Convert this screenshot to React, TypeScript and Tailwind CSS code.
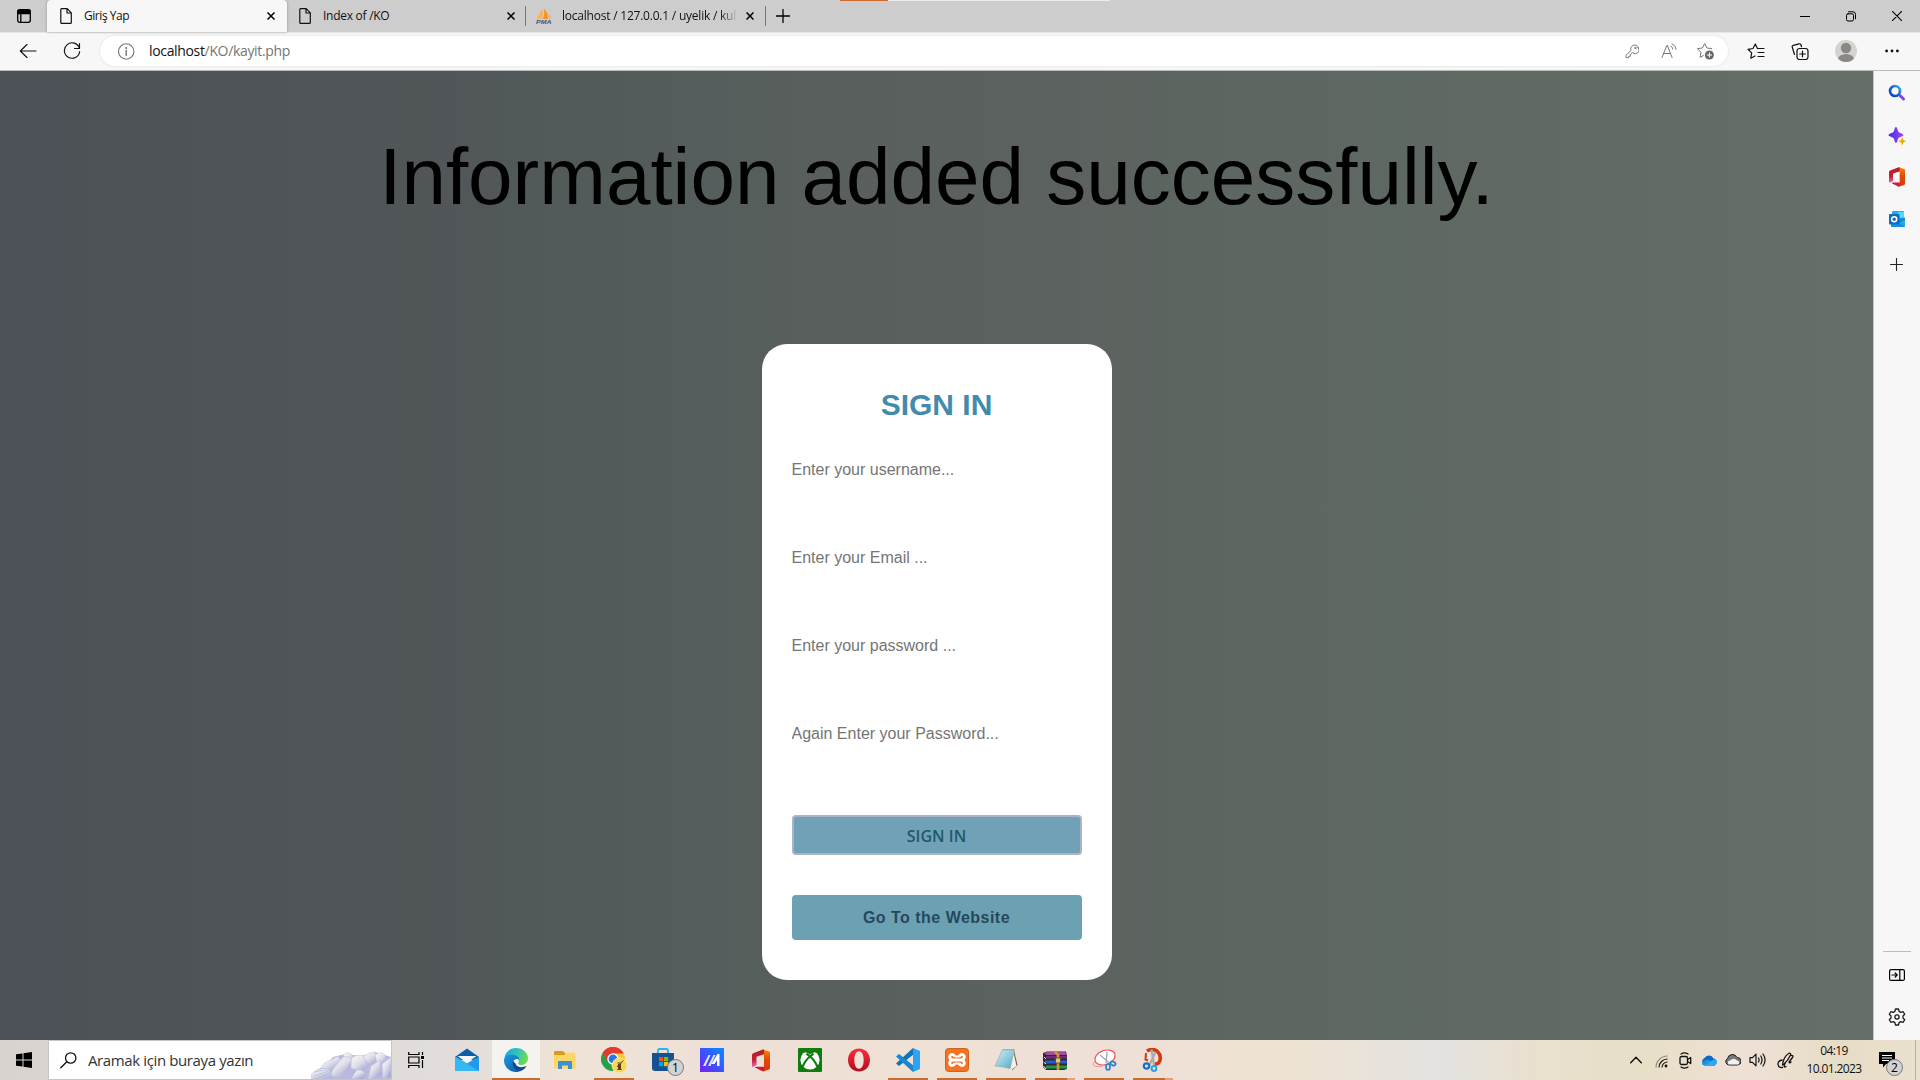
import React, { type ReactNode } from "react";

type SvgProps = { w?: number; h?: number; sw?: number; className?: string; children: ReactNode };

/* Line icon: stroke follows the text colour. */
function Line({ w = 16, h = w, sw = 1, className = "", children }: SvgProps) {
  return (
    <svg
      width={w}
      height={h}
      viewBox={`0 0 ${w} ${h}`}
      fill="none"
      stroke="currentColor"
      strokeWidth={sw}
      strokeLinecap="round"
      strokeLinejoin="round"
      className={`shrink-0 ${className}`}
    >
      {children}
    </svg>
  );
}

/* Filled, multi-colour icon. */
function Art({ w = 24, h = w, className = "", children }: SvgProps) {
  return (
    <svg width={w} height={h} viewBox={`0 0 ${w} ${h}`} className={`shrink-0 ${className}`}>
      {children}
    </svg>
  );
}

const CloseIcon = () => (
  <Line w={8} sw={1.5} className="text-black">
    <path d="M.5.5l7 7M7.5.5l-7 7" strokeLinecap="butt" />
  </Line>
);

const DocIcon = () => (
  <Line w={12} h={16} sw={1.2} className="text-[#111]">
    <path d="M.8 1.6C.8 1 1.1.7 1.6.7H7.2L11.3 4.8V14.4c0 .6-.3.9-.8.9H1.6c-.5 0-.8-.3-.8-.9ZM7 .8V5h4.2" />
  </Line>
);

const PmaIcon = () => (
  <Art w={16}>
    <path d="M1 11C2 8 4 4 6.500 1.500C7 5 7 8 6 11Z" fill="#fbb25a" />
    <path d="M7 11C8.500 7 8.500 3 8 .5C11 3 12 7 12 11Z" fill="#f7931e" />
    <path d="M12.500 10.500C13 8 12.800 6 12.300 5C14 6.500 15 8.500 15.400 10.500Z" fill="#fbb25a" />
    <text x="0" y="15.600" fontSize="5.500" fontWeight="700" fontStyle="italic" textLength="15.500" lengthAdjust="spacingAndGlyphs" fill="#4a4f87" fontFamily="Liberation Sans, sans-serif">
      PMA
    </text>
  </Art>
);

function OfficeIcon({ w, h }: { w: number; h: number }) {
  return (
    <svg width={w} height={h} viewBox="0 0 18 22" className="shrink-0">
      <defs>
        <linearGradient id="officeLeft" x1="0" y1="0" x2="0" y2="1">
          <stop offset="0" stopColor="#b01f24" />
          <stop offset=".6" stopColor="#c8203c" />
          <stop offset="1" stopColor="#e06bb0" />
        </linearGradient>
        <linearGradient id="officeRight" x1="0" y1="0" x2="0" y2="1">
          <stop offset="0" stopColor="#f78a00" />
          <stop offset=".45" stopColor="#e2470a" />
          <stop offset="1" stopColor="#d83b01" />
        </linearGradient>
      </defs>
      <path d="M11 0L17 2Q18 2.400 18 3.500V18.500Q18 19.600 17 20L11 22L12 17V5Z" fill="url(#officeRight)" />
      <path d="M11 0L1.200 3.800Q0 4.300 0 5.500V16.500Q0 18 2 17L4.500 15.600V7.200L12 4.700V0Z" fill="url(#officeLeft)" />
      <path d="M3.500 18.200L11 22Q12.200 21.500 12.200 20V17.300H4.500Q2.500 17.300 3.500 18.200Z" fill="#d6153c" />
    </svg>
  );
}

function Tab({ icon, title, active, fade }: { icon: ReactNode; title: string; active?: boolean; fade?: boolean }) {
  return (
    <div
      className={`flex h-8 items-center ${
        active
          ? "w-60 rounded-t-[4px] bg-[#f7f7f7] pl-[11px] pr-3 shadow-[0_0_3px_rgba(0,0,0,0.3)]"
          : "w-[239px] pl-[9px] pr-3"
      }`}
    >
      <span className="flex w-4 justify-center">{icon}</span>
      <span
        className={`flex-1 whitespace-nowrap text-[12px] leading-4 ${
          fade
            ? "ml-[10px] bg-[linear-gradient(to_right,#111_158px,#cdcdcd_176px)] bg-clip-text tracking-[-0.22px] text-transparent"
            : active
              ? "ml-[10px] tracking-[-0.45px] text-[#111]"
              : "ml-[10px] tracking-[-0.27px] text-[#111]"
        }`}
      >
        {title}
      </span>
      <CloseIcon />
    </div>
  );
}

function TabStrip() {
  return (
    <div className="relative flex h-8 items-center bg-[#cdcdcd] text-black">
      <div className="absolute left-[840px] top-0 flex h-px w-[270px]">
        <span className="w-12 bg-[#cf6a2c]" />
        <span className="flex-1 bg-[#ededed]" />
      </div>
      <div className="flex w-[47px] justify-center pl-px">
        <Line w={14} sw={1.3}>
          <rect x=".7" y=".7" width="12.600" height="12.600" rx="2" />
          <path d="M1 1.500h12v3H1z" fill="currentColor" />
          <path d="M3.800 4v9" />
        </Line>
      </div>
      <Tab active icon={<DocIcon />} title="Giriş Yap" />
      <div className="flex items-center">
        <div className="ml-px"><Tab icon={<DocIcon />} title="Index of /KO" /></div>
        <span className="-ml-[2px] h-5 w-px bg-[#777]" />
        <div className="ml-px"><Tab fade icon={<PmaIcon />} title="localhost / 127.0.0.1 / uyelik / kul" /></div>
        <span className="-ml-px h-5 w-px bg-[#777]" />
      </div>
      <Line w={14} sw={1.3} className="ml-[10px]">
        <path d="M7 .5v13M.5 7h13" />
      </Line>
      <div className="ml-auto flex items-center">
        <span className="flex w-[46px] justify-center"><Line w={10}><path d="M0 5.500h10" strokeLinecap="butt" /></Line></span>
        <span className="flex w-[46px] justify-center">
          <Line w={10} h={11}>
            <rect x=".5" y="2.800" width="7" height="7.200" rx="1.500" />
            <path d="M2.500 .8h4.500a2.500 2.500 0 0 1 2.500 2.500V7.800" />
          </Line>
        </span>
        <span className="flex w-[46px] justify-center"><Line w={10} sw={1.1}><path d="M.2.2l9.600 9.600M9.800.2L.2 9.800" /></Line></span>
      </div>
    </div>
  );
}

function Toolbar() {
  return (
    <div className="flex h-[39px] items-center border-b border-[#b9bdb9] bg-[#f7f7f7] text-[#111] shadow-[inset_0_1px_0_#e6e6e6]">
      <Line w={18} h={16} sw={1.1} className="ml-[19px]">
        <path d="M1.500 8h15.500M8 1.500L1.300 8 8 14.500" />
      </Line>
      <Line w={18} sw={1.15} className="ml-[26px]">
        <path d="M16.400 6.200A7.700 7.700 0 1 0 16.700 9.500M16.500 1.500v5h-5" />
      </Line>
      <div className="ml-[19px] flex h-[30px] w-[1628px] items-center rounded-full bg-white pl-[18px] pr-[14px] text-[#757575] shadow-[0_0_3px_rgba(0,0,0,0.1)]">
        <Line w={17} sw={1.1}>
          <circle cx="8.200" cy="8.500" r="7.700" />
          <path d="M8.200 7.500v5" strokeWidth="1.400" />
          <circle cx="8.200" cy="5" r=".5" fill="currentColor" />
        </Line>
        <span className="ml-[14px] text-[14px] leading-5 tracking-[-0.34px]">
          <span className="text-[#111]">localhost</span>/KO/kayit.php
        </span>
        <span className="ml-auto flex items-center">
          <Line w={14} h={15}>
            <path d="M13.300 3.600a3.700 3.700 0 0 0-7.200 2.800L1 11.300v2.400h2.700l.1-1.400h1.400V10.800L7.600 8.600A3.800 3.800 0 0 0 13.300 3.600Z" />
            <circle cx="10.300" cy="4" r=".7" />
          </Line>
          <Line w={16} h={16} className="ml-[22px]">
            <path d="M1 14.500L5.800 2.500h.6l4.700 12M2.500 10.500h7M10 3q1.600 1 1.800 3M11 .8q3.700 1.700 4.200 5.500" />
          </Line>
          <Line w={18} h={18} className="ml-[19px]">
            <path d="M14.900 6.500l-4-.5L8.700 1.500 6.400 6 1.400 6.700l3.600 3.600-.9 5 3.300-1.700M15.100 6.500l.7.400" />
            <circle cx="13.400" cy="13" r="4.500" fill="#666" stroke="none" />
            <path d="M13.400 10.800v4.400M11.200 13h4.400" stroke="#fff" />
          </Line>
        </span>
      </div>
      <Line w={18} h={17} sw={1.2} className="ml-[19px]">
        <path d="M10.500 5.500L8.300 1 6 5.500 1 6.300l3.700 3.600-.9 5.300L8 13M10.500 5.500h6.500M11 9.500h6M11 13.500h6" />
      </Line>
      <Line w={18} h={17} sw={1.2} className="ml-[26px]">
        <path d="M3.500 11.500L1.300 4.300a1.600 1.600 0 0 1 1-2L8 .8q1.400-.2 1.900 1l.6 1.900" />
        <rect x="6" y="5.500" width="11" height="11" rx="2.500" />
        <path d="M11.500 8.200v5.600M8.700 11h5.600" />
      </Line>
      <Art w={22} className="ml-[26px]">
        <defs><clipPath id="avatar"><circle cx="11" cy="11" r="11" /></clipPath></defs>
        <g clipPath="url(#avatar)">
          <rect width="22" height="22" fill="#d5d3d0" />
          <circle cx="11" cy="8" r="5.200" fill="#8b8785" />
          <ellipse cx="11" cy="19.200" rx="8" ry="5.200" fill="#8b8785" />
        </g>
      </Art>
      <Line w={14} h={4} className="ml-[28px]">
        <g fill="currentColor" stroke="none"><circle cx="1.600" cy="2" r="1.400" /><circle cx="7" cy="2" r="1.400" /><circle cx="12.400" cy="2" r="1.400" /></g>
      </Line>
    </div>
  );
}

const fields = ["Enter your username...", "Enter your Email ...", "Enter your password ...", "Again Enter your Password..."];

function Page() {
  return (
    <main className="flex flex-1 flex-col items-center bg-[linear-gradient(to_right,#4b5156_0%,#515759_25%,#535b5a_32%,#555e5c_38%,#595f5d_45%,#5c625f_57%,#5d6661_66%,#606a63_82%,#656f67_100%)] font-['Liberation_Sans',Arial,sans-serif]">
      <h1 className="mt-[60px] h-[92px] whitespace-nowrap text-[80px] leading-[92px] text-black">Information added successfully.</h1>
      <form className="mt-[121px] flex h-[636px] w-[350px] flex-col rounded-[25px] bg-white px-[30px]">
        <h2 className="mt-[43px] text-center text-[30px] font-bold leading-9 text-[#428bad]">SIGN IN</h2>
        <div className="mt-[22px] flex flex-col">
          {fields.map((f) => (
            <input key={f} placeholder={f} className="mb-[38px] h-[50px] w-full bg-white text-[16px] outline-none placeholder:text-[#757575]" />
          ))}
        </div>
        <button type="button" className="mt-[18px] h-10 rounded-[4px] border-2 border-[#a9b5c6] bg-[#71a1b6] pt-px font-['Open_Sans',sans-serif] text-[16px] font-semibold leading-5 text-[#21596a]">SIGN IN</button>
        <button type="button" className="mt-10 h-[45px] rounded-[4px] bg-[#6ca1b4] text-[16px] font-bold tracking-[0.48px] text-[#25485c]">Go To the Website</button>
      </form>
    </main>
  );
}

function Sidebar() {
  return (
    <aside className="flex w-[47px] flex-col items-center border-l border-[#c4c7c4] bg-[#f7f7f7] pr-px text-[#222]">
      <Art w={18} className="mt-[13px]">
        <defs>
          <linearGradient id="lens" x1="0" y1="1" x2="1" y2="0"><stop stopColor="#0b3fb5" /><stop offset=".6" stopColor="#1769e0" /><stop offset="1" stopColor="#42b6ef" /></linearGradient>
        </defs>
        <path d="M12 11.500l3.500 3.500" stroke="#8a3ff0" strokeWidth="3" strokeLinecap="round" />
        <circle cx="7" cy="7" r="5" fill="none" stroke="url(#lens)" strokeWidth="2.600" />
      </Art>
      <Art w={18} className="mt-[25px]">
        <defs><linearGradient id="spark" x1="0" y1="0" x2="1" y2="0"><stop stopColor="#3a2fe8" /><stop offset="1" stopColor="#b144f5" /></linearGradient></defs>
        <path d="M8 0C9.300 0 9.500 3.700 10.600 4.900C11.700 6 15.500 6.700 15.500 8C15.500 9.300 11.700 10 10.600 11.100C9.500 12.300 9.300 16 8 16C6.700 16 6.500 12.300 5.400 11.100C4.300 10 .5 9.300 .5 8C.5 6.700 4.300 6 5.400 4.900C6.500 3.700 6.700 0 8 0Z" fill="url(#spark)" />
        <path d="M14.200 10.800C14.800 13 15.200 13.500 17.500 14.200C15.200 15 14.800 15.400 14.200 17.800C13.600 15.400 13.200 15 10.900 14.200C13.200 13.500 13.600 13 14.200 10.800Z" fill="#f5a700" stroke="#f5a700" strokeWidth=".6" />
      </Art>
      <span className="mt-[22px]"><OfficeIcon w={16} h={20} /></span>
      <Art w={16} className="mt-[24px]">
        <rect x="3" y="0" width="12" height="12" rx="1" fill="#28a8ea" />
        <rect x="9" y="1" width="6" height="6" fill="#50d9ff" />
        <path d="M2 8L16 6.500V15a1 1 0 0 1-1 1H3a1 1 0 0 1-1-1Z" fill="#1490df" />
        <path d="M16 7v8.500L9 11Z" fill="#28a8ea" />
        <path d="M10 11L16 8" stroke="#0a5cab" strokeWidth=".8" />
        <rect x="0" y="3" width="10.500" height="10.500" rx="1" fill="#0f6cbd" />
        <circle cx="5.200" cy="8.200" r="2.500" fill="none" stroke="#fff" strokeWidth="1.500" />
      </Art>
      <Line w={13} sw={1.1} className="mt-[31px]"><path d="M6.500.5v12M.5 6.500h12" /></Line>
      <span className="mt-auto h-px w-7 bg-[#bdbdbd]" />
      <Line w={16} h={12} sw={1.2} className="mt-[17px] text-black">
        <rect x=".6" y=".6" width="14.800" height="10.800" rx="1.500" />
        <path d="M10.800 1v10M3 6h5M6.200 4L8.200 6l-2 2" />
      </Line>
      <Line w={18} sw={1.3} className="mb-[14px] mt-[27px] text-[#1c1c1c]">
        <path d="M7.500 1h3l.6 2.400 1.700 1 2.400-.7 1.500 2.600L15 8v2l1.700 1.700-1.500 2.600-2.400-.7-1.700 1L10.500 17h-3l-.6-2.400-1.700-1-2.400.7-1.500-2.600L3 10V8L1.300 6.300l1.500-2.600 2.400.7 1.700-1Z" />
        <circle cx="9" cy="9" r="2.100" />
      </Line>
    </aside>
  );
}

const MailIcon = () => (
  <Art w={24}>
    <path d="M0 9L12 .5 24 9V12H0Z" fill="#0a5fa8" />
    <path d="M0 8.500L12 15.500 24 8.500V23H0Z" fill="#1e9be8" />
    <path d="M0 23V8.500L24 23Z" fill="#35b8f2" />
    <path d="M2.500 8H21.500L12 15Z" fill="#f4f7fa" />
  </Art>
);

const EdgeIcon = () => (
  <Art w={24}>
    <defs>
      <linearGradient id="edgeTop" x1="0" y1=".3" x2="1" y2=".6"><stop stopColor="#1fa6dc" /><stop offset=".45" stopColor="#2fc2bd" /><stop offset="1" stopColor="#72dd4c" /></linearGradient>
      <linearGradient id="edgeBlue" x1="0" y1="0" x2="1" y2="1"><stop stopColor="#1b9de2" /><stop offset="1" stopColor="#0c4f9e" /></linearGradient>
    </defs>
    <path d="M.5 9.500C1.600 4 6.200 0 12 0C19 0 24 5 24 10.600C24 14.800 20.800 17 17.500 17C14.500 17 13.600 15.800 14.400 14.600C15.400 13 14.800 8.500 10 7.500Z" fill="url(#edgeTop)" />
    <path d="M0 12C.2 8.200 4 6.500 8 6.500C12.600 6.500 15.600 9.600 15.300 12.500C14.500 10 9 10.600 9 15C9 19.500 13.500 22.200 18 20.800C20 20.200 21.500 19 22.300 18C20.300 21.800 16.400 24 12 24C5 24 0 18.500 0 12Z" fill="url(#edgeBlue)" />
    <path d="M9 13C7.500 17.500 10.500 22 15.500 22.300C18.500 22.400 21.500 20 22.500 17.700C19.500 19.800 12.500 20 11.500 15.500Z" fill="#12468c" />
  </Art>
);

const FolderIcon = () => (
  <Art w={22} h={20}>
    <path d="M0 2Q0 1 1 1H9L11 3H21V8H0Z" fill="#d99b1e" />
    <path d="M0 5H10L12 2.500H20.500Q21.500 2.500 21.500 3.500V17.500Q21.500 18.500 20.500 18.500H1Q0 18.500 0 17.500Z" fill="#fdd668" />
    <path d="M4 19V12Q4 11 5 11H17Q18 11 18 12V19H14V15.500H8V19Z" fill="#3a91d8" />
  </Art>
);

const ChromeIcon = () => (
  <Art w={26}>
    <path d="M1.600 6A12 12 0 0 1 22.400 6L12 12Z" fill="#e33b2e" />
    <path d="M1.600 6A12 12 0 0 0 12 24L17.200 15 12 12Z" fill="#26a148" />
    <path d="M22.400 6A12 12 0 0 1 12 24L17.200 15 12 6Z" fill="#fcc934" />
    <path d="M1.600 6L6.800 15 12 6.500H22.700L22.400 6A12 12 0 0 0 1.600 6Z" fill="#e33b2e" />
    <circle cx="12" cy="12" r="5.700" fill="#fff" /><circle cx="12" cy="12" r="4.400" fill="#2676e5" />
    <circle cx="18.500" cy="18.500" r="7.500" fill="#f5d95c" stroke="#fff0ad" strokeWidth=".7" />
    <path d="M17 17H20V22H17ZM16 23L17 21.500H20L21 23Z" fill="#6c3e17" />
    <path d="M16 20L18.500 17L22.500 13.500M16.500 16H20.500" fill="none" stroke="#6c3e17" strokeWidth="1" />
  </Art>
);

const StoreIcon = () => (
  <Art w={24}>
    <path d="M7 6V2.500Q7 1 8.500 1H15.500Q17 1 17 2.500V6" fill="none" stroke="#28b4ea" strokeWidth="1.800" />
    <path d="M1 5H23V20Q23 23 20 23H4Q1 23 1 20Z" fill="#145390" />
    <rect x="8" y="9" width="4.200" height="4.200" fill="#f25022" /><rect x="13" y="9" width="4.200" height="4.200" fill="#7fba00" />
    <rect x="8" y="14" width="4.200" height="4.200" fill="#00a4ef" /><rect x="13" y="14" width="4.200" height="4.200" fill="#ffb900" />
  </Art>
);

const AsusIcon = () => (
  <Art w={24}>
    <defs><linearGradient id="asus" x1="1" y1="0" x2="0" y2="1"><stop stopColor="#0a8cff" /><stop offset=".5" stopColor="#3a55ff" /><stop offset="1" stopColor="#7a1cf5" /></linearGradient></defs>
    <rect width="24" height="24" fill="url(#asus)" />
    <path d="M3 18L8.500 7H10.500L5.500 18ZM8 18L13.500 7H15.500L10.500 18Z" fill="#dfe8ff" />
    <path d="M11.500 16L17.500 6H19.500V18H17V12L14.500 16Z" fill="#fff" />
  </Art>
);

const XboxIcon = () => (
  <Art w={24}>
    <rect width="24" height="24" rx="1" fill="#107c10" />
    <circle cx="12" cy="12" r="9.600" fill="#fff" />
    <path d="M5.500 4.500Q8 3.700 12 6.500Q16 3.700 18.500 4.500Q16.500 2 12 2T5.500 4.500Z" fill="#107c10" />
    <path d="M12 8.500Q7.500 12 4.500 18.800M12 8.500Q16.500 12 19.500 18.800M12 8.500L8.500 5.700M12 8.500L15.500 5.700" stroke="#107c10" strokeWidth="2.200" fill="none" />
  </Art>
);

const OperaIcon = () => (
  <Art w={24}>
    <defs><linearGradient id="opera" x1="0" y1="0" x2="0" y2="1"><stop stopColor="#ff2b3d" /><stop offset="1" stopColor="#b00d20" /></linearGradient></defs>
    <path fillRule="evenodd" d="M12 .5C18.500.5 23 5.500 23 12S18.500 23.500 12 23.500 1 18.500 1 12 5.500.5 12 .5ZM12 3.200C9 3.200 7.300 7 7.300 12S9 20.800 12 20.800 16.700 17 16.700 12 15 3.200 12 3.200Z" fill="url(#opera)" />
  </Art>
);

const CodeIcon = () => (
  <Art w={24}>
    <path d="M17 0L0 15.500 3 18 18 6Z" fill="#1072b8" />
    <path d="M0 8.500L3 6L18 18L17 24Z" fill="#1788d1" />
    <path d="M17 0L24 3V21L17 24Z" fill="#2ba5f3" />
  </Art>
);

const XamppIcon = () => (
  <Art w={24}>
    <rect x=".5" y=".5" width="23" height="23" rx="3" fill="#f37423" stroke="#cf621d" />
    <path d="M9.800 8.500Q8.500 6 6.300 6.500Q4 8 5 10Q5.800 12 8 12H16Q18.200 12 19 10Q20 8 17.700 6.500Q15.500 6 14.200 8.500M9.800 15.500Q8.500 18 6.300 17.500Q4 16 5 14Q5.800 12 8 12M14.200 15.500Q15.500 18 17.700 17.500Q20 16 19 14Q18.200 12 16 12" fill="none" stroke="#fff" strokeWidth="2.800" />
    <path d="M9.500 8.500H14.500M9.500 15.500H14.500" stroke="#fff" strokeWidth="1.800" />
  </Art>
);

const NotepadIcon = () => (
  <Art w={24}>
    <defs><linearGradient id="note" x1="0" y1="0" x2="1" y2="1"><stop stopColor="#d8f2f5" /><stop offset="1" stopColor="#4fa9c2" /></linearGradient></defs>
    <path d="M20 2.500L23.500 17L18 22.500Z" fill="#735d3b" />
    <path d="M19 2L22.500 18L17 22Z" fill="#f2f2ea" />
    <path d="M8.500 1.500H20.500L16 20.500Q9 18.500 1 18Z" fill="url(#note)" stroke="#86a9b3" strokeWidth=".6" />
    <path d="M9 2H20" stroke="#8d9699" strokeWidth="1.200" strokeDasharray="1 1" />
  </Art>
);

const RarIcon = () => (
  <Art w={26} h={24}>
    <path d="M1 5L5 3.500H24L25 8V21L22 22H4L1 19Z" fill="#302a26" />
    <path d="M1.500 5.500L5 4H23L25 7H5Z" fill="#a14da4" /><path d="M4 8H25V10.500H4Z" fill="#742878" />
    <path d="M3 12.500H25V15.500H3Z" fill="#2757e5" /><path d="M4 17.500H25V20.500H4Z" fill="#23974a" />
    <path d="M2 9L4 11M1.500 14L4 16M1.500 18L4 21" stroke="#f1e9d4" />
    <path d="M13 3.500L16 7V22" stroke="#d29932" strokeWidth="2.600" fill="none" />
    <rect x="13.500" y="10" width="5" height="5" fill="#e0c789" stroke="#5b4224" strokeWidth=".8" />
  </Art>
);

const SnipIcon = () => (
  <Art w={25} h={24}>
    <ellipse cx="13" cy="9.500" rx="10.500" ry="7" transform="rotate(-20 13 9.500)" fill="#fff" stroke="#ef5358" strokeWidth="1.200" />
    <path d="M2 14Q-.5 17.500 4 18.500Q10 19 13 17" fill="none" stroke="#f29a9c" />
    <path d="M8 7L18 15.500M15 4L14 15" stroke="#a6abb1" strokeWidth="1.400" />
    <ellipse cx="16" cy="19" rx="2" ry="3" fill="none" stroke="#2c82cc" strokeWidth="1.700" />
    <ellipse cx="21" cy="15.500" rx="2.700" ry="1.800" transform="rotate(25 21 15.500)" fill="none" stroke="#2c82cc" strokeWidth="1.700" />
  </Art>
);

const SketchIcon = () => (
  <Art w={22} h={24}>
    <path d="M5 3Q11-.2 15.500 3.500Q20 8 17.500 13.500Q16 16.500 12.500 16" stroke="#d03b0d" strokeWidth="3.600" fill="none" />
    <path d="M4 5L3.500 11.500L6 12.500" stroke="#d03b0d" strokeWidth="2" fill="none" />
    <path d="M9.500 1.500L12 17M13.500 4L7.500 17" stroke="#a9abaf" strokeWidth="2.200" />
    <circle cx="4.500" cy="18" r="2.700" fill="none" stroke="#1673c4" strokeWidth="2.200" />
    <circle cx="12" cy="20.500" r="2.400" fill="none" stroke="#2ba0ea" strokeWidth="2" />
  </Art>
);

type AppEntry = { icon: ReactNode; open?: boolean; multi?: boolean; active?: boolean; badge?: string };

const apps: AppEntry[] = [
  { icon: <MailIcon /> },
  { icon: <EdgeIcon />, active: true },
  { icon: <FolderIcon /> },
  { icon: <ChromeIcon />, open: true },
  { icon: <StoreIcon />, badge: "1" },
  { icon: <AsusIcon /> },
  { icon: <OfficeIcon w={18} h={23} /> },
  { icon: <XboxIcon /> },
  { icon: <OperaIcon /> },
  { icon: <CodeIcon />, open: true },
  { icon: <XamppIcon />, open: true },
  { icon: <NotepadIcon />, open: true },
  { icon: <RarIcon />, open: true, multi: true },
  { icon: <SnipIcon />, open: true },
  { icon: <SketchIcon />, open: true, multi: true },
];

function Badge({ text, className }: { text: string; className: string }) {
  return (
    <span className={`absolute flex size-[17px] items-center justify-center rounded-full border border-[#777] bg-[#d2d2d2] font-['Open_Sans',sans-serif] text-[12px] leading-none text-black ${className}`}>
      {text}
    </span>
  );
}

function TaskButton({ icon, open, multi, active, badge }: AppEntry) {
  return (
    <div className="relative flex h-10 w-[49px] items-center justify-center pr-px">
      {active && <span className="absolute inset-y-0 left-0 w-12 border-b-2 border-[#cb6c2c] bg-[#f5f3f0]" />}
      <span className="relative">{icon}</span>
      {badge && <Badge text={badge} className="left-[28px] top-[19px]" />}
      {open && (
        <span className="absolute bottom-0 left-1 flex h-[2px] w-10">
          <span className="flex-1 bg-[#cb6c2c]" />
          {multi && <span className="w-2 bg-[#dfa27b]" />}
        </span>
      )}
    </div>
  );
}

/* Cluster of pale pebbles at the end of the search box. */
const Pebbles = () => (
  <svg width="80" height="28" viewBox="0 0 80 28" className="absolute bottom-0 right-0">
    <defs>
      <linearGradient id="stone" x1="0" y1="0" x2=".8" y2="1"><stop stopColor="#fffaf2" /><stop offset=".5" stopColor="#e1e0eb" /><stop offset="1" stopColor="#9fa3cf" /></linearGradient>
    </defs>
    <path d="M0 28C0 20 6 19 14 15L22 6 34 3 50 5 64 1 80 6V28Z" fill="#b9badb" />
    <g fill="url(#stone)" stroke="#b7b8d6" strokeWidth=".4">
      <path d="M0 24Q4 17 18 17L20 22 5 28H0Z" />
      <path d="M10 17Q12 11 20 9L27 5 30 10 23 20Z" />
      <path d="M32 5Q35-1 40 3L44 8 40 12Z" />
      <path d="M40 8Q46 2 52 5L58 14 50 21 40 17Z" />
      <path d="M52 6Q57 1 64 1L66 8 59 14Z" />
      <path d="M64 4Q70-1 74 4L76 14 66 12Z" />
      <path d="M22 18L32 6Q38 4 41 9L30 26Q22 27 20 23Z" />
      <path d="M60 15L69 9 70 24 63 28H57Z" />
      <path d="M40 28L45 20Q50 17 54 22L52 28Z" />
      <path d="M71 13L80 6V26L72 28Z" />
    </g>
    <path d="M3 21L19 18M2 25L18 20M8 28L20 23" stroke="#b8cdec" strokeWidth="1.200" />
  </svg>
);

function Taskbar() {
  return (
    <footer className="flex h-10 bg-[linear-gradient(to_right,#d8d3cf_0%,#dfdbd8_20%,#e2dddb_24%,#efe3d6_29%,#eedfd7_39%,#efe1d4_47%,#eedfd8_58%,#eee3d2_67%,#e3e2e0_75%,#e9e0ce_80%,#e8dfc8_86%,#eee0d6_91%,#e7ddc6_96%,#eae0cf_100%)] text-[#111]">
      <div className="flex w-12 items-center justify-center">
        <Art w={16}>
          <path d="M0 2.300L6.500 1.400V7.500H0ZM7.500 1.200L16 0V7.500H7.500ZM0 8.500H6.500V14.600L0 13.700ZM7.500 8.500H16V16L7.500 14.800Z" />
        </Art>
      </div>
      <div className="relative flex w-[344px] items-center border border-[#c5c5c5] bg-white pl-[11px]">
        <Line w={17} sw={1.3}>
          <circle cx="10.700" cy="6" r="5.200" /><path d="M6.800 9.800L.8 15.800" />
        </Line>
        <span className="ml-[11px] text-[15px] leading-5 tracking-[-0.38px] text-[#333]">Aramak için buraya yazın</span>
        <Pebbles />
      </div>
      <div className="flex w-[51px] items-center pl-4">
        <Line w={17} h={16} sw={1.2} className="text-black">
          <g strokeLinecap="butt" strokeLinejoin="miter">
            <path d="M.7 0V2.500H11V0M.7 16V13.500H11V16M.7 5H11V11H.7ZM14.500 0V3M14.500 8V16" />
            <path d="M13 4h3v3h-3z" fill="currentColor" stroke="none" />
          </g>
        </Line>
      </div>
      <div className="flex">
        {apps.map((a, i) => <TaskButton key={i} {...a} />)}
      </div>
      <div className="ml-auto flex items-center">
        <Line w={12} h={8} sw={1.4}><path d="M.7 6.700L6 1.300l5.300 5.400" /></Line>
        <Line w={13} h={13} sw={1.1} className="ml-[13px] mt-[2px]">
          <g strokeLinecap="butt">
            <path d="M1 12.500A11.500 11.500 0 0 1 12.500 1" stroke="#8b8679" /><path d="M4 12.500A8.500 8.500 0 0 1 12.500 4M7 12.500A5.500 5.500 0 0 1 12.500 7" />
          </g>
          <circle cx="11" cy="11" r="1.400" fill="currentColor" stroke="none" />
        </Line>
        <Line w={13} h={17} sw={1.3} className="ml-[11px]">
          <rect x="1" y="4.500" width="7.500" height="8" rx="1.500" />
          <path d="M8.500 7.500L11.700 5.500V11.500L8.500 9.500M2 2Q5.500-.3 9 2M2 15Q5.500 17.300 9 15" />
        </Line>
        <Art w={16} h={11} className="ml-[9px]">
          <path d="M4 10.500A4 4 0 0 1 3.500 3A5 5 0 0 1 12.500 3.500A3.600 3.600 0 0 1 13 10.500Z" fill="#0a6cc5" />
          <path d="M1 9Q3 5 7 4.500L13.500 8 14 10.500H4Q2 10.500 1 9Z" fill="#1a93e3" /><path d="M3 10.500L9.500 6.500Q14 3 16 6Q16.500 10 13 10.500Z" fill="#30a8ef" />
        </Art>
        <Art w={16} h={12} className="ml-[8px]">
          <path d="M4 11A3.500 3.500 0 0 1 2.500 4.500A5 5 0 0 1 12 3.500A3.700 3.700 0 0 1 12.500 11Z" fill="#777" stroke="#222" />
          <path d="M3.500 10.500Q1.500 7 5 6.500Q9 3 12 6.500Q15.500 7 13.500 10.500Z" fill="#f2f0ec" />
        </Art>
        <Line w={17} h={14} sw={1.2} className="ml-[8px]">
          <path d="M1 4.700H3.500L7 1.200V12.800L3.500 9.300H1ZM9.500 5Q10.800 7 9.500 9M11.800 3Q14.300 7 11.800 11M14 1Q18.200 7 14 13" />
        </Line>
        <Line w={17} h={17} sw={1.3} className="ml-[11px]">
          <path d="M6 10Q8 3 12.500 1Q14 1.500 13.500 3Q11 8.500 7 12L5.500 13ZM5 8Q.5 9 1 12.500Q1.500 16 5.500 15.500M8.500 10.500Q5.500 16.500 9 14.500M13.500 3.500Q17 3 15.500 5.500L12 10Q12.500 11.500 14 10" />
        </Line>
        <div className="ml-[13px] flex w-[54px] flex-col items-center whitespace-nowrap text-[12px] leading-[18px] tracking-[-0.6px]">
          <span>04:19</span>
          <span>10.01.2023</span>
        </div>
        <div className="relative ml-[18px] h-10 w-9">
          <Art w={16} h={16} className="mt-[12px]">
            <path d="M0 0H16V12H7L4 15.500V12H0Z" /><path d="M3 3.500H13M3 6H13M3 8.500H10" stroke="#fff" strokeWidth="1.100" />
          </Art>
          <Badge text="2" className="left-[7px] top-[19px]" />
        </div>
        <span className="h-10 w-px bg-[#b7b0a0]" />
        <span className="w-1" />
      </div>
    </footer>
  );
}

export default function App() {
  return (
    <div className="flex h-[1080px] w-[1920px] flex-col overflow-hidden font-['Open_Sans','Noto_Sans',sans-serif]">
      <TabStrip />
      <Toolbar />
      <div className="flex h-[969px]">
        <Page />
        <Sidebar />
      </div>
      <Taskbar />
    </div>
  );
}
